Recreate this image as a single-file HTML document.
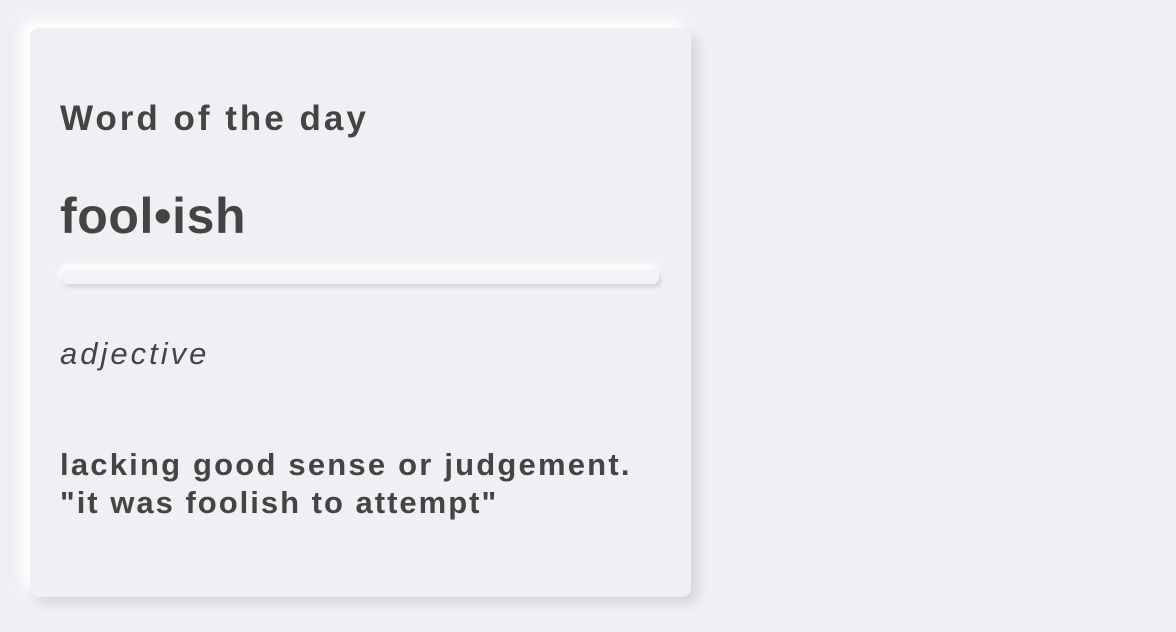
<!DOCTYPE html>
<html><head><style>
html,body{margin:0;padding:0;width:1176px;height:632px;background:#eff0f4;overflow:hidden;font-family:"Liberation Sans",sans-serif;color:#444}
.card{position:absolute;left:30px;top:28px;width:661px;height:569px;border-radius:9px;background:#eff0f4;box-shadow:-8px -8px 14px #fff,6px 6px 12px rgba(0,0,0,0.12)}
.t{position:absolute;left:60px;white-space:nowrap;font-weight:bold}
.bar{position:absolute;left:62px;top:269px;width:597px;height:15px;border-radius:6px;background:#f2f3f6;box-shadow:-2px -5px 8px #fff,2px 3px 4px rgba(0,0,0,0.13)}
</style></head><body>
<div class="card"></div>
<div class="t" style="top:99px;font-size:35px;letter-spacing:3px">Word of the day</div>
<div class="t" style="top:187px;font-size:50px;letter-spacing:0.6px">fool•ish</div>
<div class="bar"></div>
<div class="t" style="top:336px;font-size:31px;font-weight:normal;font-style:italic;letter-spacing:3px">adjective</div>
<div class="t" style="top:447px;font-size:31px;letter-spacing:2.2px">lacking good sense or judgement.</div>
<div class="t" style="top:485px;font-size:31px;letter-spacing:2px">"it was foolish to attempt"</div>
</body></html>
